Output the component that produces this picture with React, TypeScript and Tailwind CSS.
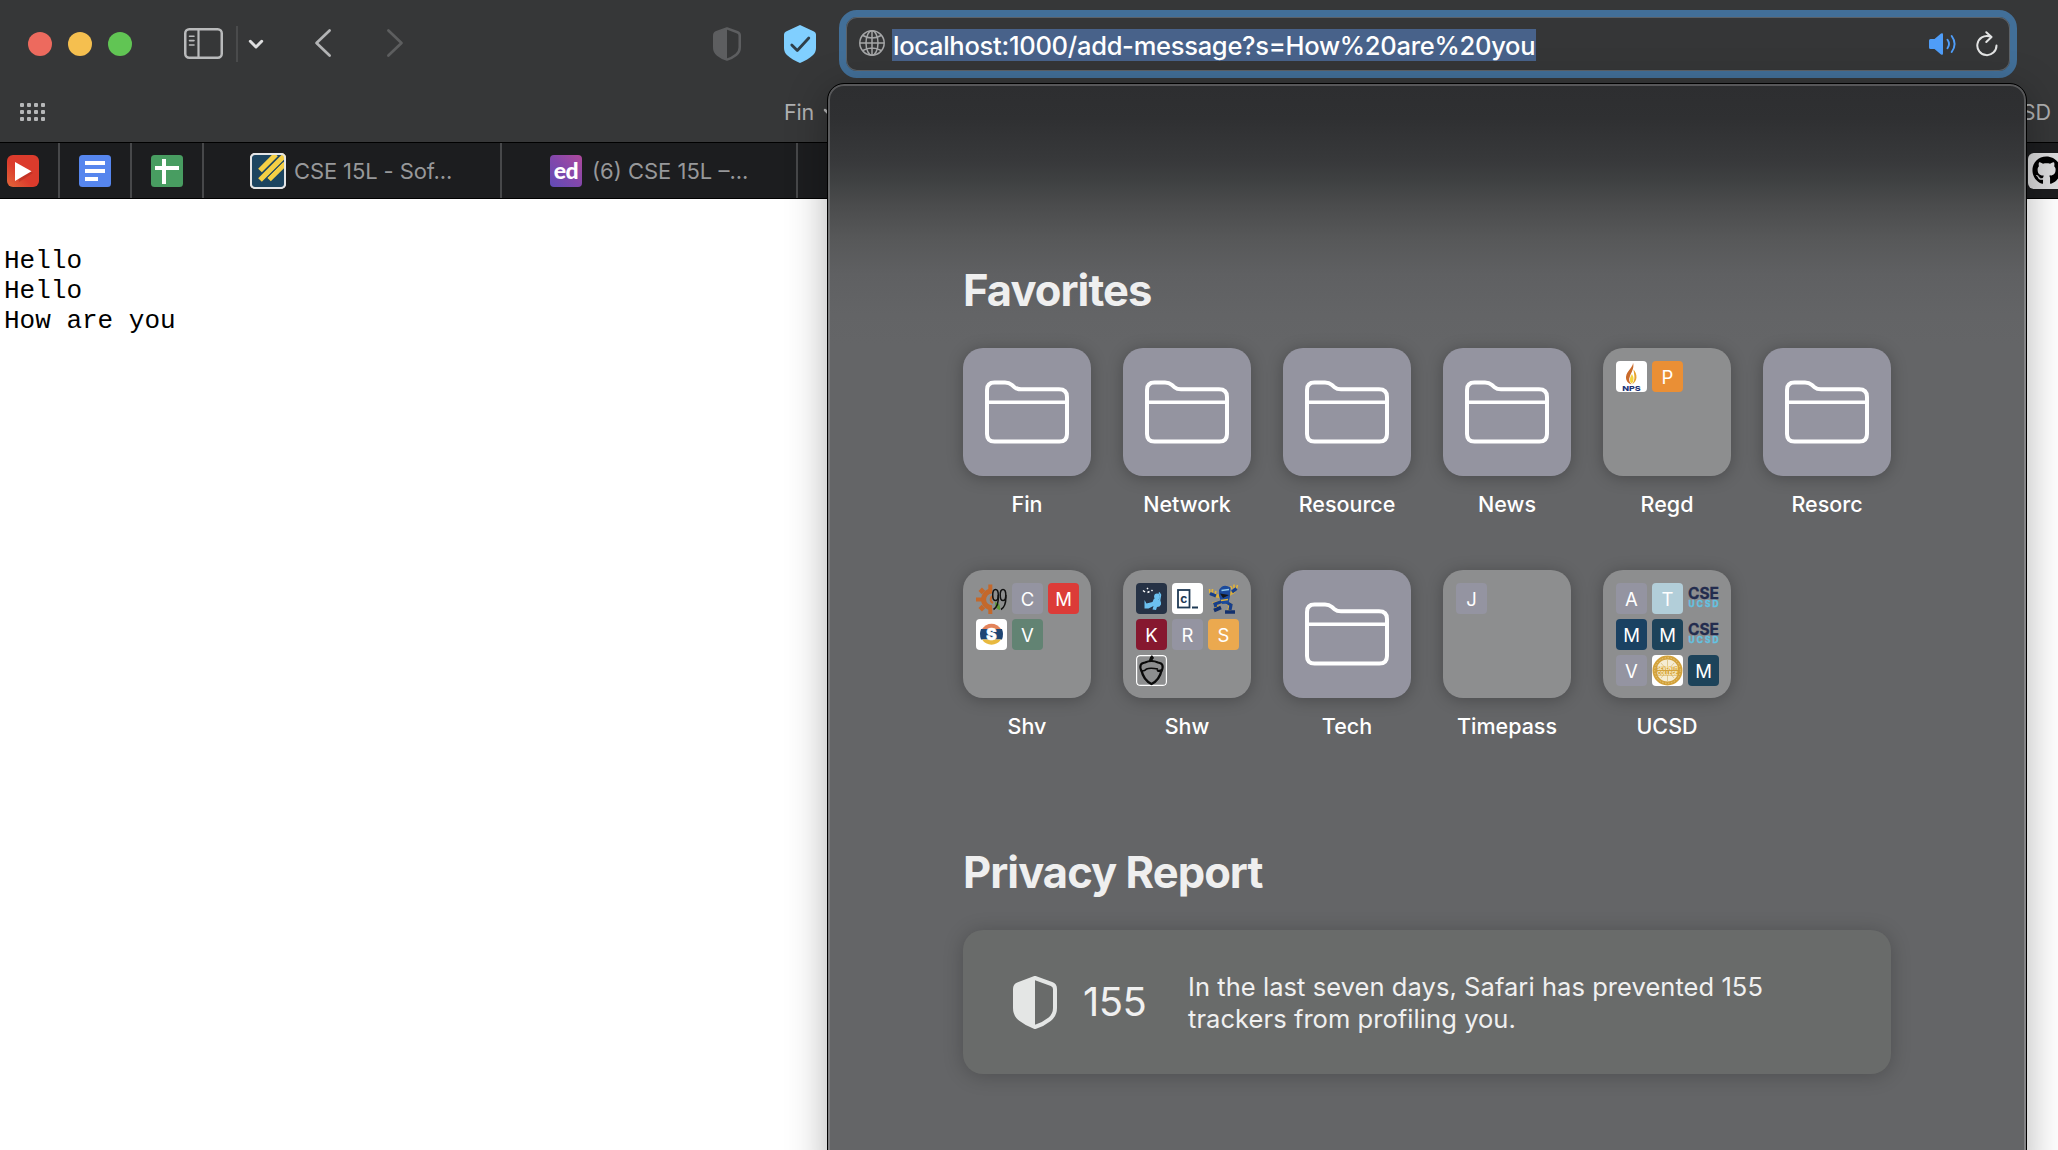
import type { ReactNode } from "react";
import { FaGithub } from "react-icons/fa";

const SANS = "font-['Inter','Liberation_Sans',sans-serif]";

function ShieldHalf({ w, h, color }: { w: number; h: number; color: string }) {
  return (
    <svg width={w} height={h} viewBox="0 0 44 53" fill="none">
      <path d="M22 2 L38.5 8 Q42 9.3 42 13 V32 Q42 39 36.5 43.3 Q30 48.500 22 51 Q14 48.500 7.500 43.300 Q2 39 2 32 V13 Q2 9.300 5.500 8 Z" stroke={color} strokeWidth="4" strokeLinejoin="round" />
      <path d="M22 2 L5.500 8 Q2 9.300 2 13 V32 Q2 39 7.500 43.300 Q14 48.500 22 51 Z" fill={color} />
    </svg>
  );
}

function Toolbar() {
  return (
    <div className="flex h-[88px] shrink-0 items-center pl-7">
      <div className="flex gap-4">
        <span className="size-6 rounded-full bg-[#ed6a5e]" />
        <span className="size-6 rounded-full bg-[#f5bf4f]" />
        <span className="size-6 rounded-full bg-[#61c554]" />
      </div>
      <svg className="ml-[52px] -mt-0.5" width="39" height="31" viewBox="0 0 39 31" fill="none" stroke="#b9babb">
        <rect x="1.250" y="1.250" width="36.500" height="28.500" rx="4" strokeWidth="2.500" />
        <path d="M14.500 1V30" strokeWidth="2.200" />
        <path d="M5.500 8.200H10M5.500 12.600H10M5.500 17H10" strokeWidth="1.600" strokeLinecap="round" />
      </svg>
      <span className="ml-[13px] h-9 w-[2px] bg-[#4a4b4c]" />
      <svg className="ml-[10px]" width="16" height="11" viewBox="0 0 16 11" fill="none">
        <path d="M2.300 2.300L8 8L13.700 2.300" stroke="#dededf" strokeWidth="3" strokeLinecap="round" strokeLinejoin="round" />
      </svg>
      <svg className="ml-[50px] -mt-0.5" width="18" height="30" viewBox="0 0 18 30" fill="none">
        <path d="M15.600 2.500L2.500 15L15.600 27.500" stroke="#b3b4b5" strokeWidth="2.700" strokeLinecap="round" strokeLinejoin="round" />
      </svg>
      <svg className="ml-[54px] -mt-0.5" width="18" height="30" viewBox="0 0 18 30" fill="none">
        <path d="M2.400 2.500L15.500 15L2.400 27.500" stroke="#5d5e5f" strokeWidth="2.700" strokeLinecap="round" strokeLinejoin="round" />
      </svg>
      <span className="ml-[309px]"><ShieldHalf w={28} h={34} color="#5d5e60" /></span>
      <svg className="ml-[43px]" width="32" height="38" viewBox="0 0 32 38" fill="none">
        <path d="M16 0L30 6.500Q32 7.500 32 9.500V23Q32 27.500 28.500 30.500Q24 34.500 16 38Q8 34.500 3.500 30.500Q0 27.500 0 23V9.500Q0 7.500 2 6.500Z" fill="#80cfff" />
        <path d="M7.800 20L13.300 25.500L24.800 13" stroke="#2f3f4a" strokeWidth="2.800" strokeLinecap="round" strokeLinejoin="round" />
      </svg>
      <div className="ml-[23px] flex h-[68px] w-[1178px] items-center rounded-[18px] border-[7px] border-[#426f98] bg-[#353637] pr-[12px] pl-[13px] shadow-[inset_0_0_0_1px_#5c6268]">
        <svg className="-mt-0.5" width="26" height="26" viewBox="0 0 26 26" fill="none" stroke="#a5a6a7" strokeWidth="1.500">
          <circle cx="13" cy="13" r="12.200" />
          <ellipse cx="13" cy="13" rx="6" ry="12.200" />
          <path d="M13 1V25M1 13H25M3.800 5.500Q13 10.500 22.200 5.500M3.800 20.500Q13 15.500 22.200 20.500" />
        </svg>
        <span className="mt-[2px] ml-[7px] flex h-8 w-[644px] items-center bg-[#48628a]">
          <span className="pt-[2px] pl-px text-[25.500px] leading-[30px] font-medium tracking-[-0.270px] whitespace-nowrap text-white">localhost:1000/add-message?s=How%20are%20you</span>
        </span>
        <svg className="ml-auto" width="28" height="22" viewBox="0 0 28 22" fill="none">
          <path d="M0 7.500Q0 6 1.500 6H5.500L12 .6Q14 -.5 14 1.500V20.500Q14 22.500 12 21.400L5.500 16H1.500Q0 16 0 14.500Z" fill="#4f9df8" />
          <path d="M18.500 6.800Q21.500 11 18.500 15.200M22.700 3Q28.500 11 22.700 19" stroke="#4f9df8" strokeWidth="1.900" strokeLinecap="round" />
        </svg>
        <svg className="ml-[19px]" width="22" height="26" viewBox="0 0 22 26" fill="none" stroke="#e2e3e3" strokeWidth="2" strokeLinecap="round" strokeLinejoin="round">
          <path d="M20.500 14.500A9.600 9.600 0 1 1 13.500 5.300M10.300 1.200L15.500 6L10.300 11" />
        </svg>
      </div>
    </div>
  );
}

function BookmarksBar() {
  return (
    <div className="flex h-[54px] shrink-0 items-center pr-[7px] pb-[6px] pl-5 text-[21.500px] text-[#b0b1b2]">
      <div className="grid grid-cols-4 gap-[3px]">
        {Array.from({ length: 12 }, (_, i) => (
          <span key={i} className="size-1 rounded-[1px] bg-[#b6b7b8]" />
        ))}
      </div>
      <span className="ml-[739px] tracking-[-0.200px]">Fin</span>
      <svg className="ml-[9px]" width="14" height="9" viewBox="0 0 14 9" fill="none">
        <path d="M2 2L7 7L12 2" stroke="#b0b1b2" strokeWidth="2.500" strokeLinecap="round" />
      </svg>
      <span className="ml-auto">UCSD</span>
    </div>
  );
}

function TabBar() {
  const tab = "flex h-full shrink-0 items-center border-r-2 border-[#47484a]";
  return (
    <div className="flex h-[57px] shrink-0 items-center border-y border-t-black border-b-black bg-[#1c1d1f] text-[22px] text-[#97989a]">
      <div className={`${tab} w-[60px] pl-[7px]`}>
        <svg width="32" height="32" viewBox="0 0 32 32">
          <defs>
            <linearGradient id="yt" x1="0" y1="1" x2=".7" y2=".3"><stop offset="0" stopColor="#e2683a" /><stop offset=".6" stopColor="#db3b2c" /></linearGradient>
          </defs>
          <rect width="32" height="32" rx="6" fill="url(#yt)" />
          <path d="M10 9L26 18L12 27Z" fill="#a92b20" opacity=".5" />
          <path d="M8 7L24.500 16.300L8 26Z" fill="#fff" />
        </svg>
      </div>
      <div className={`${tab} w-[72px] pl-[19px]`}>
        <svg width="32" height="32" viewBox="0 0 32 32">
          <rect width="32" height="32" rx="3.500" fill="#5686ee" />
          <path d="M6 6H26V10H6ZM6 14H26V18H6ZM6 22H19V26H6Z" fill="#fff" />
        </svg>
      </div>
      <div className={`${tab} w-[72px] pl-[19px]`}>
        <svg width="32" height="32" viewBox="0 0 32 32">
          <rect width="32" height="32" rx="3.500" fill="#489d61" />
          <path d="M11 4H15V11H28V15H15V29H11V15H4V11H11Z" fill="#fff" />
        </svg>
      </div>
      <div className={`${tab} w-[298px] pl-[46px]`}>
        <svg width="36" height="36" viewBox="0 0 36 36">
          <rect width="36" height="36" rx="5" fill="#e4e5e6" />
          <rect x="2" y="2" width="32" height="32" rx="2" fill="#1d4560" />
          <path d="M10 17.500L26 1.500M10 27L35 2M19 26.500L35 10.500" stroke="#f5cf45" strokeWidth="5.200" />
          <path d="M10 22L31 1M15 26.800L35 6.800" stroke="#1d4560" strokeWidth=".9" />
          <rect x="1" y="1" width="34" height="34" rx="4" fill="none" stroke="#e4e5e6" strokeWidth="2" />
        </svg>
        <span className="ml-2 pt-[2px] tracking-[-0.120px] whitespace-nowrap">CSE 15L - Sof...</span>
      </div>
      <div className={`${tab} w-[296px] pl-12`}>
        <span className="flex size-8 items-center justify-center rounded bg-linear-to-tr from-[#5f4bb6] via-[#8247ab] to-[#b0489c] pb-[1px] font-['Lato','Inter',sans-serif] text-[23px] leading-none font-black tracking-[-0.5px] text-white">ed</span>
        <span className="ml-[10px] pt-[2px] whitespace-nowrap">(6) CSE 15L –...</span>
      </div>
      <span className="ml-[1230px] flex h-9 w-9 shrink-0 items-center justify-center rounded-[6px] bg-[#dcdcdd]">
        <FaGithub size={29} color="#000" />
      </span>
    </div>
  );
}

function Letter({ bg, children }: { bg: string; children: string }) {
  return <span className={`flex size-[31px] items-center justify-center rounded-[4px] pt-[2px] text-[18.500px] leading-none text-white ${bg}`}>{children}</span>;
}

function Mini({ children, className = "" }: { children: ReactNode; className?: string }) {
  return (
    <span className={`block size-[31px] overflow-hidden rounded-[4px] ${className}`}>
      <svg width="31" height="31" viewBox="0 0 31 31" fill="none">{children}</svg>
    </span>
  );
}

function CseMark() {
  return (
    <Mini>
      <text x="0" y="15.600" fontSize="15.500" fontWeight="700" fill="#232c4e" stroke="#232c4e" strokeWidth=".3" textLength="31" lengthAdjust="spacingAndGlyphs">CSE</text>
      <text x=".5" y="24.200" fontSize="8.400" fontWeight="700" fill="#63c3e2" stroke="#63c3e2" strokeWidth=".35" textLength="30">UCSD</text>
    </Mini>
  );
}

const gray = "bg-[#9494a1]";

const nps = (
  <Mini className="bg-white">
    <path d="M17 1.500C17.500 6 10.500 10 10 16C9.800 20 12.500 22.500 15.500 23.500C13 21 12.500 18.500 14 15C15.500 11 18.500 7 17 1.500Z" fill="#c96a2b" />
    <path d="M17.500 8.500C21.500 13 22 20 16 23.500C20 18 18 14 17.500 8.500Z" fill="#e8a32f" />
    <path d="M16 13Q19.500 19 15.500 22.500Q12 19 16 13Z" fill="#f3d43e" />
    <text x="6.200" y="30.200" fontSize="6.800" fontWeight="800" fill="#223579" textLength="18.500" lengthAdjust="spacingAndGlyphs">NPS</text>
  </Mini>
);
const gear = (
  <Mini>
    <path d="M14.300 1.500V8M14.300 25V31M0 16.500H6" stroke="#c4682b" strokeWidth="4" />
    <path d="M4.200 6.300L7.500 9.500M4.200 26.800L7.500 23.500" stroke="#c4682b" strokeWidth="5" />
    <path d="M16 8A8.400 8.400 0 0 0 16 24.800" stroke="#c4682b" strokeWidth="5" />
    <path d="M17 13A3.800 3.800 0 0 0 17 20" stroke="#c4682b" strokeWidth="2" />
    <path d="M19 19Q25 20 24 27Q19 26 19 19Z" fill="#5f9a35" />
    <ellipse cx="19.500" cy="12" rx="2.800" ry="5.600" stroke="#111" strokeWidth="1.500" />
    <path d="M22.300 12Q23 23 17.500 26.500" stroke="#111" strokeWidth="1.500" />
    <ellipse cx="27" cy="12" rx="2.800" ry="5.600" stroke="#111" strokeWidth="1.500" />
    <path d="M29.800 12Q30.500 23 25 26.500" stroke="#111" strokeWidth="1.500" />
  </Mini>
);
const sLogo = (
  <Mini className="bg-white">
    <path d="M6 10A11.200 11.200 0 0 1 25 10Z" fill="#e3845b" />
    <path d="M5 10H26Q28 15.500 26 20.500H5Q3 15.500 5 10Z" fill="#1f4573" />
    <path d="M6 20.500A11.200 11.200 0 0 0 25 20.500Z" fill="#e8b93f" />
    <text x="15.500" y="21" textAnchor="middle" fontSize="15.500" fontWeight="900" fill="#fff" stroke="#fff" strokeWidth=".6">S</text>
  </Mini>
);
const diver = (
  <Mini className="bg-[#263245]">
    <path d="M7 7.500L9 9M11.500 9.500L13.500 8.500M11 5L12 6M15.500 8L16.500 7" stroke="#fff" strokeWidth="1.500" />
    <circle cx="21" cy="13.500" r="2.900" fill="#6bc0ef" />
    <path d="M18 15.500L22 16Q25.500 17 25 21.500Q24 24 21 24L20 27L16.500 26.500L17.500 23L12.500 25.500L8.500 25.500L8.500 17L10.500 20.500L16.500 19Z" fill="#6bc0ef" />
    <path d="M23.500 18L24.500 12L23 9.500" stroke="#6bc0ef" strokeWidth="1.500" />
  </Mini>
);
const cBox = (
  <Mini className="bg-white">
    <rect x="6" y="7" width="11.500" height="17.500" stroke="#1f3a55" strokeWidth="1.800" />
    <text x="11.700" y="20" textAnchor="middle" fontSize="12" fontWeight="700" fill="#1f3a55">c</text>
    <path d="M20 24.500H26" stroke="#1f3a55" strokeWidth="1.800" />
  </Mini>
);
const mascot = (
  <Mini>
    <path d="M12 13.500L5 12M20 12L26.500 8M14 19L7 20.500L10 26M18 19L22.500 22L21 28" stroke="#d9ae3f" strokeWidth="3.800" />
    <path d="M2 10L1.500 6M4 10L4.500 6M7 11L8 8M24 6L22.500 3M26 5L26 1.500M28.500 5.500L29.500 2" stroke="#e3b53a" strokeWidth="1.600" />
    <path d="M2 10.500L8 13M24 9L28.500 5.500M14 18.500L7 21L8 24M18 19L23 22L22 27" stroke="#173f8c" strokeWidth="3.200" />
    <path d="M11 7Q15 0 22.500 4.500L22 13L20.500 20.500L14 21L11 13Z" fill="#1b4a9c" />
    <path d="M13.500 7.500L21 6.500" stroke="#8fc6ea" strokeWidth="1.700" />
    <path d="M12 10.500L21 12L15 15Z" fill="#15161a" />
    <path d="M6 27.500L13 24.500M17 29H27" stroke="#12306e" strokeWidth="3.600" />
    <path d="M13 17.500L20 16.500" stroke="#e0b23c" strokeWidth="1.500" />
  </Mini>
);
const acorn = (
  <Mini>
    <rect x=".6" y=".6" width="29.800" height="29.800" rx="3.500" stroke="#fff" strokeWidth="1.200" />
    <path d="M14.500 6Q15 3 17 1.500" stroke="#0a0a0a" strokeWidth="3.600" />
    <path d="M5.500 16Q2 8.500 9 7.500Q15.500 4.500 22 7.500Q29 8.500 25.500 16" stroke="#0a0a0a" strokeWidth="2.200" />
    <path d="M5.500 15.500Q7.500 25 15.500 29Q23.500 25 25.500 15.500Q21 16.500 22 14.500" stroke="#0a0a0a" strokeWidth="2.400" strokeLinejoin="round" />
    <path d="M6 16Q9 16 10.500 14Q14 12.500 22 14" stroke="#0a0a0a" strokeWidth="1.700" />
  </Mini>
);
const seal = (
  <Mini className="bg-white">
    <circle cx="15.500" cy="15.500" r="13" fill="#f5ecd2" stroke="#d3a23b" strokeWidth="4" />
    <circle cx="15.500" cy="15.500" r="12.800" stroke="#ecd08c" strokeWidth=".8" strokeDasharray="1.500 1.500" />
    <path d="M15.500 5V26M9 8L22 23M22 8L9 23M7 15.500H24" stroke="#d9bb72" strokeWidth=".7" />
    <path d="M4 11H27V20.500H4Z" fill="#d3a23b" />
    <text x="5.300" y="15.400" fontSize="4.500" fontWeight="700" fill="#fff6dd" textLength="20.500">SEVENTH</text>
    <text x="5.300" y="19.600" fontSize="4.500" fontWeight="700" fill="#fff6dd" textLength="20.500">COLLEGE</text>
  </Mini>
);

type Fav = { name: string; items?: ReactNode[] };
const favorites: Fav[] = [
  { name: "Fin" },
  { name: "Network" },
  { name: "Resource" },
  { name: "News" },
  { name: "Regd", items: [nps, <Letter bg="bg-[#ea8f35]">P</Letter>] },
  { name: "Resorc" },
  { name: "Shv", items: [gear, <Letter bg={gray}>C</Letter>, <Letter bg="bg-[#dc3b38]">M</Letter>, sLogo, <Letter bg="bg-[#628373]">V</Letter>] },
  { name: "Shw", items: [diver, cBox, mascot, <Letter bg="bg-[#86182f]">K</Letter>, <Letter bg={gray}>R</Letter>, <Letter bg="bg-[#eba94f]">S</Letter>, acorn] },
  { name: "Tech" },
  { name: "Timepass", items: [<Letter bg={gray}>J</Letter>] },
  {
    name: "UCSD",
    items: [
      <Letter bg={gray}>A</Letter>, <Letter bg="bg-[#b2ced9]">T</Letter>, <CseMark />,
      <Letter bg="bg-[#1a4162]">M</Letter>, <Letter bg="bg-[#1d435a]">M</Letter>, <CseMark />,
      <Letter bg={gray}>V</Letter>, seal, <Letter bg="bg-[#1d435a]">M</Letter>,
    ],
  },
];

function FolderIcon() {
  return (
    <svg width="84" height="64" viewBox="0 0 84 64" fill="none" stroke="#fff" strokeWidth="4">
      <path d="M2 10Q2 2.500 9.500 2.500H20Q24 2.500 27 5L29.500 7.200Q32 9.300 36 9.300H74Q82 9.300 82 17V54Q82 61.500 74.500 61.500H9.500Q2 61.500 2 54Z" />
      <path d="M2 22.300H82" strokeWidth="3.400" />
    </svg>
  );
}

function FavoriteTile({ fav }: { fav: Fav }) {
  return (
    <div className="flex h-[222px] w-32 flex-col items-center">
      {fav.items ? (
        <div className="grid size-32 grid-cols-[31px_31px_31px] content-start gap-[5px] rounded-[20px] bg-[#8d8e8f] p-[13px] shadow-[0_2px_16px_rgba(0,0,0,0.26)]">
          {fav.items.map((item, i) => <span key={i}>{item}</span>)}
        </div>
      ) : (
        <div className="flex size-32 items-center justify-center rounded-[20px] bg-[#9494a0] shadow-[0_2px_16px_rgba(0,0,0,0.26)]">
          <FolderIcon />
        </div>
      )}
      <span className="mt-[14px] text-[21.500px] leading-[28px] font-medium whitespace-nowrap text-white">{fav.name}</span>
    </div>
  );
}

function StartPanel() {
  return (
    <div className="absolute top-[83px] left-[827px] h-[1100px] w-[1200px] rounded-[17px] border border-black bg-[linear-gradient(180deg,#2d2e30_0px,#2f3032_35px,#38393b_78px,#3e4041_95px,#4b4c4d_122px,#575859_155px,#5f6062_190px,#636466_230px,#646567_260px)] pt-[179px] pl-[135px] shadow-[0_8px_40px_rgba(0,0,0,0.3),inset_0_0_0_2px_rgba(255,255,255,0.2)]">
      <h2 className="h-[85px] text-[43.500px] leading-[54px] font-bold tracking-[-0.950px] text-[#efefef]">Favorites</h2>
      <div className="grid w-[928px] grid-cols-6 gap-x-8">
        {favorites.map((f) => <FavoriteTile key={f.name} fav={f} />)}
      </div>
      <h2 className="mt-[53px] text-[43.500px] leading-[54px] font-bold tracking-[-0.950px] text-[#efefef]">Privacy Report</h2>
      <div className="mt-[31px] flex h-36 w-[928px] items-center rounded-[20px] bg-[#696b6a] pl-[50px] text-[#f0f0f0] shadow-[0_2px_20px_rgba(0,0,0,0.22)]">
        <ShieldHalf w={44} h={53} color="#e4e6e5" />
        <span className="ml-[26px] w-[66px] text-[40px] leading-none tracking-[-0.600px]">155</span>
        <p className="ml-[39px] pt-[2px] text-[25.500px] leading-8 tracking-[0.060px] whitespace-nowrap">
          In the last seven days, Safari has prevented 155<br />trackers from profiling you.
        </p>
      </div>
    </div>
  );
}

export default function App() {
  return (
    <div className={`relative flex h-[1150px] w-[2058px] flex-col overflow-hidden bg-white ${SANS}`}>
      <div className="flex shrink-0 flex-col bg-[#363738]"><Toolbar /><BookmarksBar /></div>
      <TabBar />
      <pre className="pt-[47px] pl-1 font-['Courier_New','Liberation_Mono',monospace] text-[26px] leading-[30px] text-black">{"Hello\nHello\nHow are you"}</pre>
      <StartPanel />
    </div>
  );
}
